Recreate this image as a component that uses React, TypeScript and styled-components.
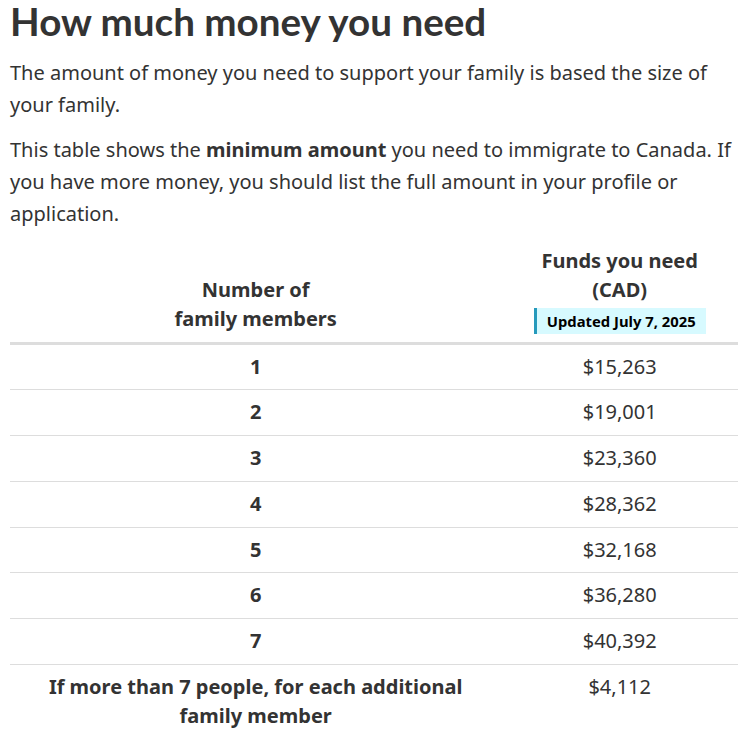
import React from "react";
import styled, { createGlobalStyle } from "styled-components";

const Global = createGlobalStyle`
  html, body { margin: 0; padding: 0; background: #fff; }
  body { font-family: "Noto Sans", sans-serif; color: #333; }
`;

const Page = styled.main`
  padding: 0 0 0 10px;
`;

const Heading = styled.h2`
  font-family: Lato, "Noto Sans", sans-serif;
  font-weight: 700;
  font-size: 38.6px;
  line-height: 42px;
  margin: 0 0 15px;
  color: #333;
`;

const Intro = styled.div`
  display: flex;
  flex-direction: column;
  gap: 13px;
`;

const Para = styled.p`
  font-size: 20px;
  line-height: 32px;
  margin: 0;
`;

const Table = styled.table`
  width: 100%;
  border-collapse: collapse;
  margin-top: 9px;
  font-size: 20px;
  line-height: 1.4375;
`;

const Th = styled.th<{ $w?: string }>`
  width: ${(p) => p.$w ?? "auto"};
  text-align: center;
  vertical-align: bottom;
  padding: 8px;
  font-weight: 700;
  border-bottom: 3px solid #ddd;
`;

const Td = styled.td<{ $bold?: boolean }>`
  text-align: center;
  vertical-align: top;
  padding: 8px;
  font-weight: ${(p) => (p.$bold ? 700 : 400)};
  border-top: 1px solid #ddd;
`;

const BadgeRow = styled.div`
  display: flex;
  justify-content: center;
  margin-top: 3px;
`;

const Badge = styled.span`
  display: block;
  background: #d7faff;
  border-left: 3px solid #269abc;
  color: #000;
  font-size: 14.8px;
  font-weight: 700;
  line-height: 26px;
  padding: 0 10px;
`;

const rows = [
  ["1", "$15,263"],
  ["2", "$19,001"],
  ["3", "$23,360"],
  ["4", "$28,362"],
  ["5", "$32,168"],
  ["6", "$36,280"],
  ["7", "$40,392"],
  ["If more than 7 people, for each additional family member", "$4,112"],
];

export default function App() {
  return (
    <Page>
      <Global />
      <Heading>How much money you need</Heading>
      <Intro>
        <Para>
          The amount of money you need to support your family is based the size
          of your family.
        </Para>
        <Para>
          This table shows the <strong>minimum amount</strong> you need to
          immigrate to Canada. If you have more money, you should list the full
          amount in your profile or application.
        </Para>
      </Intro>
      <Table>
        <thead>
          <tr>
            <Th $w="67.5%">
              Number of
              <br />
              family members
            </Th>
            <Th>
              Funds you need
              <br />
              (CAD)
              <BadgeRow>
                <Badge>Updated July 7, 2025</Badge>
              </BadgeRow>
            </Th>
          </tr>
        </thead>
        <tbody>
          {rows.map(([n, v]) => (
            <tr key={n}>
              <Td $bold>{n}</Td>
              <Td>{v}</Td>
            </tr>
          ))}
        </tbody>
      </Table>
    </Page>
  );
}
